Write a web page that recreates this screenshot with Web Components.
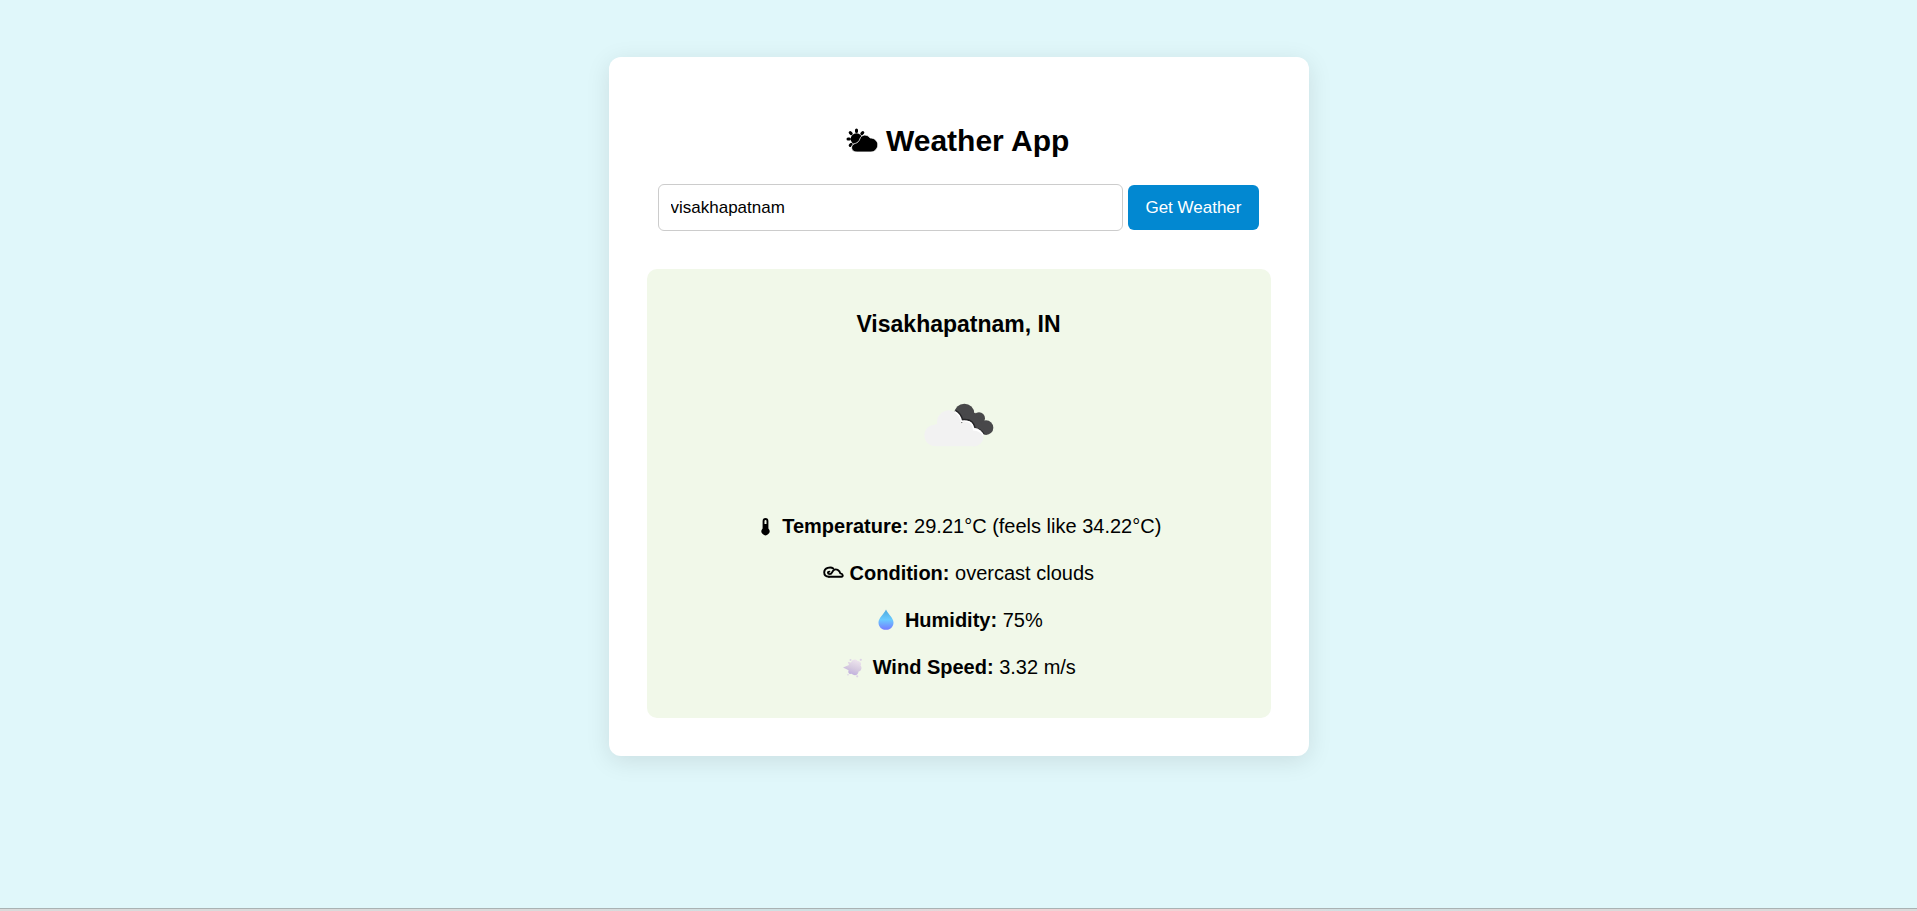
<!DOCTYPE html>
<html lang="en">
<head>
<meta charset="utf-8">
<title>Weather App</title>
<style>
html, body { margin: 0; }
body { font-family: Arial, "Liberation Sans", sans-serif; background: #e0f7fa; color: #000; }
</style>
</head>
<body>
<weather-page>
  <weather-card>
    <weather-search slot="search" value="visakhapatnam"></weather-search>
    <weather-result place="Visakhapatnam, IN">
      <weather-fact icon="thermometer" label="Temperature:">29.21°C (feels like 34.22°C)</weather-fact>
      <weather-fact icon="cloud" label="Condition:">overcast clouds</weather-fact>
      <weather-fact icon="drop" label="Humidity:">75%</weather-fact>
      <weather-fact icon="wind" label="Wind Speed:">3.32 m/s</weather-fact>
    </weather-result>
  </weather-card>
</weather-page>
<script>
const glyphs = {
  sun: `<svg width="32" height="26" viewBox="0 0 32 26">
    <circle cx="10.500" cy="11" r="5.800"/>
    <g stroke="#000" stroke-width="3" stroke-linecap="round"><path d="M10.500 2v1.400M4.200 4.600l1 1M2 11h1.400M4.200 17.400l1-1M16.800 4.600l-1 1"/></g>
    <path d="M11 24C4.500 24 3.700 16.400 9.400 15.400C11.500 14.800 13.200 13.200 13.800 11.100C15.300 6.100 21.400 5.900 24 9.900C28.500 9.800 32 13.200 31.800 17C31.600 21 28.500 24 25 24Z" stroke="#fff" stroke-width=".8"/></svg>`,
  thermometer: `<svg width="21" height="20" viewBox="0 0 21 20"><path d="M6.600 11.500V4a2.900 2.900 0 0 1 5.800 0v7.500a4 4 0 1 1-5.800 0Z"/><path d="M8.500 7V4a1 1 0 0 1 2 0V7Z" fill="#f1f8e9"/></svg>`,
  cloud: `<svg width="21" height="20" viewBox="0 0 21 20"><g fill="none" stroke="#000" stroke-width="1.900" stroke-linecap="round" stroke-linejoin="round"><path d="M6 12.800H18.500C20.500 12.800 20.100 9.600 17.300 9.400C16.700 6 13 4.400 10.800 6.100C8.900 7.200 9.400 10.100 6.800 10.100C4.500 10.100 4.300 7.700 6.400 7.600"/><path d="M10.300 4.500C7.500 2.400 1.200 3.800 1.200 8.300C1.200 11.300 3.300 12.800 6 12.800"/></g></svg>`,
  drop: `<svg width="25" height="22" viewBox="0 0 25 22"><defs><linearGradient id="d" x1="0" y1="0" x2="0" y2="1"><stop stop-color="#4da9dd"/><stop offset=".5" stop-color="#6acbff"/><stop offset="1" stop-color="#757bff"/></linearGradient></defs><path d="M12 .500C10 5 4.500 9 4.500 13.400C4.500 18 8 20.800 12 20.800S19.500 18 19.500 13.400C19.500 9 14 5 12 .500Z" fill="url(#d)"/></svg>`,
  wind: `<svg width="26" height="20" viewBox="0 0 26 20"><defs><linearGradient id="w" x1=".7" y1="0" x2=".3" y2="1"><stop stop-color="#eee5ee"/><stop offset=".55" stop-color="#d5c9df"/><stop offset="1" stop-color="#bba9de"/></linearGradient></defs><path d="M2 9.500L8 7L6.800 3.800L10 4.600C11 1.200 15 .600 16.500 3C19.500 3 21 5.500 19.500 7.500C21.500 9.600 20.400 13 17.600 13.500C17.200 17.300 13.500 18.400 10.500 15.800C8 16.500 6.500 14.500 7.600 12.200Z" fill="url(#w)"/><g fill="#ddd2e6"><circle cx="9.500" cy="2" r="1"/><circle cx="19.800" cy="1.800" r="1.100"/><circle cx="16.200" cy="18.300" r="1.100"/><circle cx="7" cy="16.700" r=".8"/></g></svg>`,
  overcast: `<svg width="120" height="90" viewBox="-4 0 360 270" role="img" aria-label="overcast clouds"><g fill="#48484a"><circle cx="192" cy="98" r="30"/><circle cx="236" cy="112" r="18"/><circle cx="257" cy="140" r="22"/><path d="M175 105L225 95L260 160L220 150Z"/></g><path d="M166 89Q182 98 186 116Q219 112 224 142Q242 144 251 160" fill="none" stroke="#242426" stroke-width="5"/><g fill="#f2f2f2"><circle cx="104" cy="163" r="32"/><circle cx="146" cy="124" r="36"/><circle cx="199" cy="140" r="21"/><circle cx="221" cy="168" r="28"/><path d="M104 130H205L225 196H104Z"/></g><path d="M163 92Q179 100 183 121Q215 115 220 146Q240 147 249 163" fill="none" stroke="#fff" stroke-width="5"/></svg>`
};

function define(name, render) {
  customElements.define(name, class extends HTMLElement {
    connectedCallback() {
      if (!this.shadowRoot) this.attachShadow({ mode: "open" }).innerHTML = render(this);
    }
  });
}

define("weather-page", () => `<style>
  :host { display: flex; flex-direction: column; min-height: 100vh; }
  main { flex: 1; padding: 57px 20px; }
  .edge { height: 2px; border-top: 1px solid #a9b2b3; background: linear-gradient(90deg, #dadada 0 30%, #cfe0e2 38% 45%, #f0d3d5 51% 66%, #cfe0e2 70% 74%, #dadada 78%); }
  </style><main><slot></slot></main><div class="edge"></div>`);

define("weather-card", () => `<style>
  :host { display: block; box-sizing: border-box; max-width: 700px; margin: 0 auto; padding: 65px 38px 38px; background: #fff; border-radius: 12px; box-shadow: 0 5px 25px rgba(0,0,0,.1); }
  h1 { margin: 0 0 25px; font-size: 30px; line-height: 37px; text-align: center; }
  svg { vertical-align: -3px; margin-left: -2px; }
  </style><h1>${glyphs.sun} Weather App</h1><slot name="search"></slot><slot></slot>`);

define("weather-search", el => `<style>
  :host { display: block; padding: 0 12px 0 11px; }
  form { display: flex; align-items: center; gap: 5px; }
  input, button { box-sizing: border-box; font: 17px Arial, "Liberation Sans", sans-serif; border-radius: 6px; }
  input { flex: 1; min-width: 0; height: 47px; padding: 0 12px; border: 1px solid #ccc; background: #fff; color: #000; }
  button { height: 45px; padding: 0 17px; border: 0; background: #0288d1; color: #fff; }
  </style><form onsubmit="return false"><input type="text" aria-label="City" value="${el.getAttribute("value")}"><button type="submit">Get Weather</button></form>`);

define("weather-result", el => `<style>
  :host { display: block; margin-top: 38px; padding: 42px 20px 39px; background: #f1f8e9; border-radius: 10px; text-align: center; }
  h2 { margin: 0 0 43px; font-size: 23px; line-height: 27px; }
  .sky { display: flex; justify-content: center; margin-bottom: 44px; }
  .facts { display: grid; gap: 24px; }
  </style><h2>${el.getAttribute("place")}</h2><div class="sky">${glyphs.overcast}</div><div class="facts"><slot></slot></div>`);

define("weather-fact", el => `<style>
  :host { display: block; }
  p { margin: 0; height: 23px; font-size: 20px; line-height: 23px; }
  svg { vertical-align: -4px; }
  </style><p>${glyphs[el.getAttribute("icon")]} <strong>${el.getAttribute("label")}</strong> <slot></slot></p>`);
</script>
</body>
</html>
